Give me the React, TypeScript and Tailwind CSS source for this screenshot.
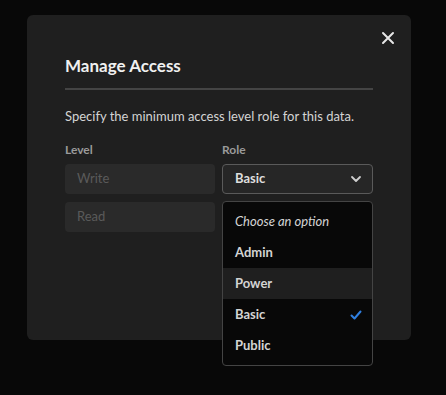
import React from 'react';

const options = ['Admin', 'Power', 'Basic', 'Public'];

export default function App() {
  return (
    <div className="h-[395px] w-full bg-[#080808] pt-[15px] pl-[27px] font-['Lato',sans-serif]">
      <div className="relative h-[325px] w-[384px] rounded-md bg-[#1f1f1f] px-[38px]">
        <button className="absolute right-[16px] top-[16px] text-[#e6e6e6]">
          <svg width="14" height="14" viewBox="0 0 14 14" fill="none" stroke="currentColor" strokeWidth="2" strokeLinecap="round">
            <path d="M2 2 L12 12 M12 2 L2 12" />
          </svg>
        </button>

        <h2 className="pt-[39px] text-[17px] font-bold leading-6 text-[#f0f0f0]">Manage Access</h2>
        <div className="mt-[10px] h-[2px] bg-[#444444]" />
        <p className="mt-[16px] whitespace-nowrap text-[13px] leading-5 text-[#d4d4d4]">Specify the minimum access level role for this data.</p>

        <div className="mt-[16px] grid grid-cols-[150px_151px] gap-x-[7px]">
          <div className="flex flex-col">
            <span className="text-[12px] font-bold leading-4 text-[#9a9a9a]">Level</span>
            <div className="mt-[6px] flex h-[30px] items-center rounded bg-[#2a2a2a] px-3 text-[13px] text-[#5a5a5a]">Write</div>
            <div className="mt-[8px] flex h-[30px] items-center rounded bg-[#2a2a2a] px-3 text-[13px] text-[#5a5a5a]">Read</div>
          </div>
          <div className="relative flex flex-col">
            <span className="text-[12px] font-bold leading-4 text-[#9a9a9a]">Role</span>
            <div className="mt-[6px] flex h-[30px] items-center justify-between rounded border border-[#5a5a5a] bg-[#262626] pl-3 pr-[10px] text-[13px] font-bold text-[#dedede]">
              <span>Basic</span>
              <svg width="12" height="8" viewBox="0 0 12 8" fill="none" stroke="#cfcfcf" strokeWidth="1.8" strokeLinecap="round" strokeLinejoin="round">
                <path d="M2 2 L6 6 L10 2" />
              </svg>
            </div>
            <div className="absolute left-0 right-0 top-[59px] z-10 rounded border border-[#444444] bg-[#080808] py-[4px]">
              <div className="flex h-[31px] items-center px-3 text-[13px] italic text-[#d4d4d4]">Choose an option</div>
              {options.map((o) => (
                <div
                  key={o}
                  className={`flex h-[31px] items-center justify-between pl-3 pr-[10px] text-[13px] font-bold text-[#d4d4d4] ${o === 'Power' ? 'bg-[#1f1f1f]' : ''}`}
                >
                  <span>{o}</span>
                  {o === 'Basic' && (
                    <svg width="12" height="10" viewBox="0 0 12 10" fill="none" stroke="#2f7fe0" strokeWidth="2" strokeLinecap="round" strokeLinejoin="round">
                      <path d="M1.5 5.5 L4.5 8.5 L10.5 1.5" />
                    </svg>
                  )}
                </div>
              ))}
            </div>
          </div>
        </div>
      </div>
    </div>
  );
}
